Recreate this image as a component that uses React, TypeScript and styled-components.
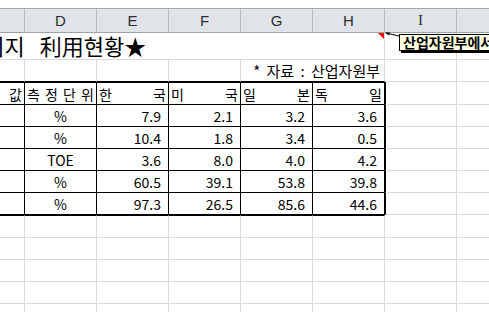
import React from 'react';
import styled, { createGlobalStyle, css } from 'styled-components';

const GRID = '#dadada';
const INK = '#000';

const GlobalStyle = createGlobalStyle`
    html, body {
        margin: 0;
        padding: 0;
        background: #fff;
        overflow: hidden;
    }
`;

const Sheet = styled.div`
    position: relative;
    width: 489px;
    height: 312px;
    overflow: hidden;
    background: #fff;
    font-family: "Noto Sans CJK KR", "Noto Sans", sans-serif;
    color: #000;
`;

const TopStrip = styled.div`
    height: 8px;
    border-bottom: 1px solid #a4a8ae;
`;

const HeaderBand = styled.div`
    display: grid;
    grid-template-columns: 25px repeat(7, 72px);
    height: 23px;
    background: #e0e3e7;
    border-bottom: 1px solid #9ea3a9;
`;

const ColumnLabel = styled.div<{ $serif?: boolean }>`
    display: flex;
    align-items: center;
    justify-content: center;
    border-right: 1px solid #b7bbc0;
    font-family: ${p => p.$serif ? '"Liberation Serif", serif' : '"Liberation Sans", sans-serif'};
    font-size: 15px;
    color: #2b2f35;
`;

const Grid = styled.div`
    display: grid;
    grid-template-columns: 25px repeat(7, 72px);
    grid-template-rows: 27px 22px 23px repeat(5, 22px) 23px repeat(4, 22px);
`;

type Align = 'left' | 'center' | 'right' | 'spread';

interface CellProps {
    $span?: number;
    $inkRight?: boolean;
    $inkBottom?: boolean;
    $inkTop?: boolean;
    $inkLeft?: boolean;
    $align?: Align;
}

const Cell = styled.div<CellProps>`
    box-sizing: border-box;
    position: relative;
    min-width: 0;
    display: flex;
    align-items: center;
    padding: 0 2px;
    font-size: 14px;
    line-height: 20px;
    white-space: nowrap;
    border-right: 1px solid ${p => p.$inkRight ? INK : GRID};
    border-bottom: 1px solid ${p => p.$inkBottom ? INK : GRID};
    ${p => p.$span && css`grid-column: span ${p.$span};`}
    ${p => p.$inkTop && css`border-top: 1px solid ${INK};`}
    ${p => p.$inkLeft && css`border-left: 1px solid ${INK};`}
    justify-content: ${p =>
        p.$align === 'center' ? 'center' :
        p.$align === 'right' ? 'flex-end' :
        p.$align === 'spread' ? 'space-between' : 'flex-start'};
`;

const NumberCell = styled(Cell)`
    padding-right: 7px;
`;

const TitleCell = styled(Cell)`
    overflow: hidden;
    align-items: flex-end;
    padding: 0 0 1px 0;
`;

const TitleLead = styled.span`
    margin-left: -36px;
    font-size: 22px;
    line-height: 26px;
`;

const TitleMain = styled.span`
    margin-left: 15px;
    font-size: 22px;
    line-height: 26px;
`;

const NoteCell = styled(Cell)`
    padding-right: 4px;
    font-size: 15px;
    word-spacing: 3px;
`;

const Indicator = styled.div`
    position: absolute;
    top: 0;
    right: 0;
    width: 0;
    height: 0;
    border-top: 6px solid #ff0000;
    border-left: 6px solid transparent;
`;

const Connector = styled.svg`
    position: absolute;
    left: 384px;
    top: 32px;
`;

const Comment = styled.div`
    position: absolute;
    left: 399px;
    top: 34px;
    padding: 0 3px;
    background: #ffffe1;
    border: 1px solid #000;
    box-shadow: 2px 2px 0 #000;
    font-size: 14px;
    font-weight: 700;
    line-height: 15px;
    white-space: nowrap;
`;

const columns = ['', 'D', 'E', 'F', 'G', 'H', 'I', ''];

const countries = [['한', '국'], ['미', '국'], ['일', '본'], ['독', '일']];

const rows = [
    ['%', '7.9', '2.1', '3.2', '3.6'],
    ['%', '10.4', '1.8', '3.4', '0.5'],
    ['TOE', '3.6', '8.0', '4.0', '4.2'],
    ['%', '60.5', '39.1', '53.8', '39.8'],
    ['%', '97.3', '26.5', '85.6', '44.6'],
];

const Spread: React.FC<{ text: string[] }> = ({ text }) => (
    <>
        {text.map((ch, i) => <span key={i}>{ch}</span>)}
    </>
);

const OuterCells: React.FC<{ inkLeft?: boolean }> = ({ inkLeft }) => (
    <>
        <Cell $inkLeft={inkLeft} />
        <Cell />
    </>
);

const App: React.FC = () => {
    return (
        <Sheet>
            <GlobalStyle />
            <TopStrip />
            <HeaderBand>
                {columns.map((c, i) => (
                    <ColumnLabel key={i} $serif={c === 'I'}>{c}</ColumnLabel>
                ))}
            </HeaderBand>

            <Grid>
                {/* row 1: merged title */}
                <TitleCell $span={6}>
                    <TitleLead>에너지</TitleLead>
                    <TitleMain>利用현황★</TitleMain>
                    <Indicator />
                </TitleCell>
                <OuterCells />

                {/* row 2: source note */}
                {[0, 1, 2, 3].map(i => <Cell key={i} $inkBottom />)}
                <NoteCell $span={2} $inkBottom $align='right'>* 자료 : 산업자원부</NoteCell>
                <OuterCells />

                {/* row 3: table header */}
                <Cell $inkTop $inkRight $inkBottom $align='right'>값</Cell>
                <Cell $inkTop $inkRight $inkBottom $align='spread'>
                    <Spread text={['측', '정', '단', '위']} />
                </Cell>
                {countries.map((pair, i) => (
                    <Cell key={i} $inkTop $inkRight $inkBottom $align='spread'>
                        <Spread text={pair} />
                    </Cell>
                ))}
                <OuterCells inkLeft />

                {/* data rows */}
                {rows.map((r, ri) => (
                    <React.Fragment key={ri}>
                        <Cell $inkRight $inkBottom />
                        <Cell $inkRight $inkBottom $align='center'>{r[0]}</Cell>
                        {r.slice(1).map((v, vi) => (
                            <NumberCell key={vi} $inkRight $inkBottom $align='right'>{v}</NumberCell>
                        ))}
                        <OuterCells inkLeft />
                    </React.Fragment>
                ))}

                {/* rows under the table */}
                {[0, 1, 2, 3, 4, 5].map(i => <Cell key={i} $inkTop />)}
                <OuterCells />
                {Array.from({ length: 32 }).map((_, i) => <Cell key={i} />)}
            </Grid>

            <Connector width={16} height={6} viewBox='0 0 16 6'>
                <line x1={2} y1={1} x2={15} y2={4} stroke='#000' strokeWidth={1} />
                <polygon points='1,0.5 6,0.5 5,3.5' fill='#000' />
            </Connector>
            <Comment>산업자원부에서 발표한 자료</Comment>
        </Sheet>
    );
};

export default App;
